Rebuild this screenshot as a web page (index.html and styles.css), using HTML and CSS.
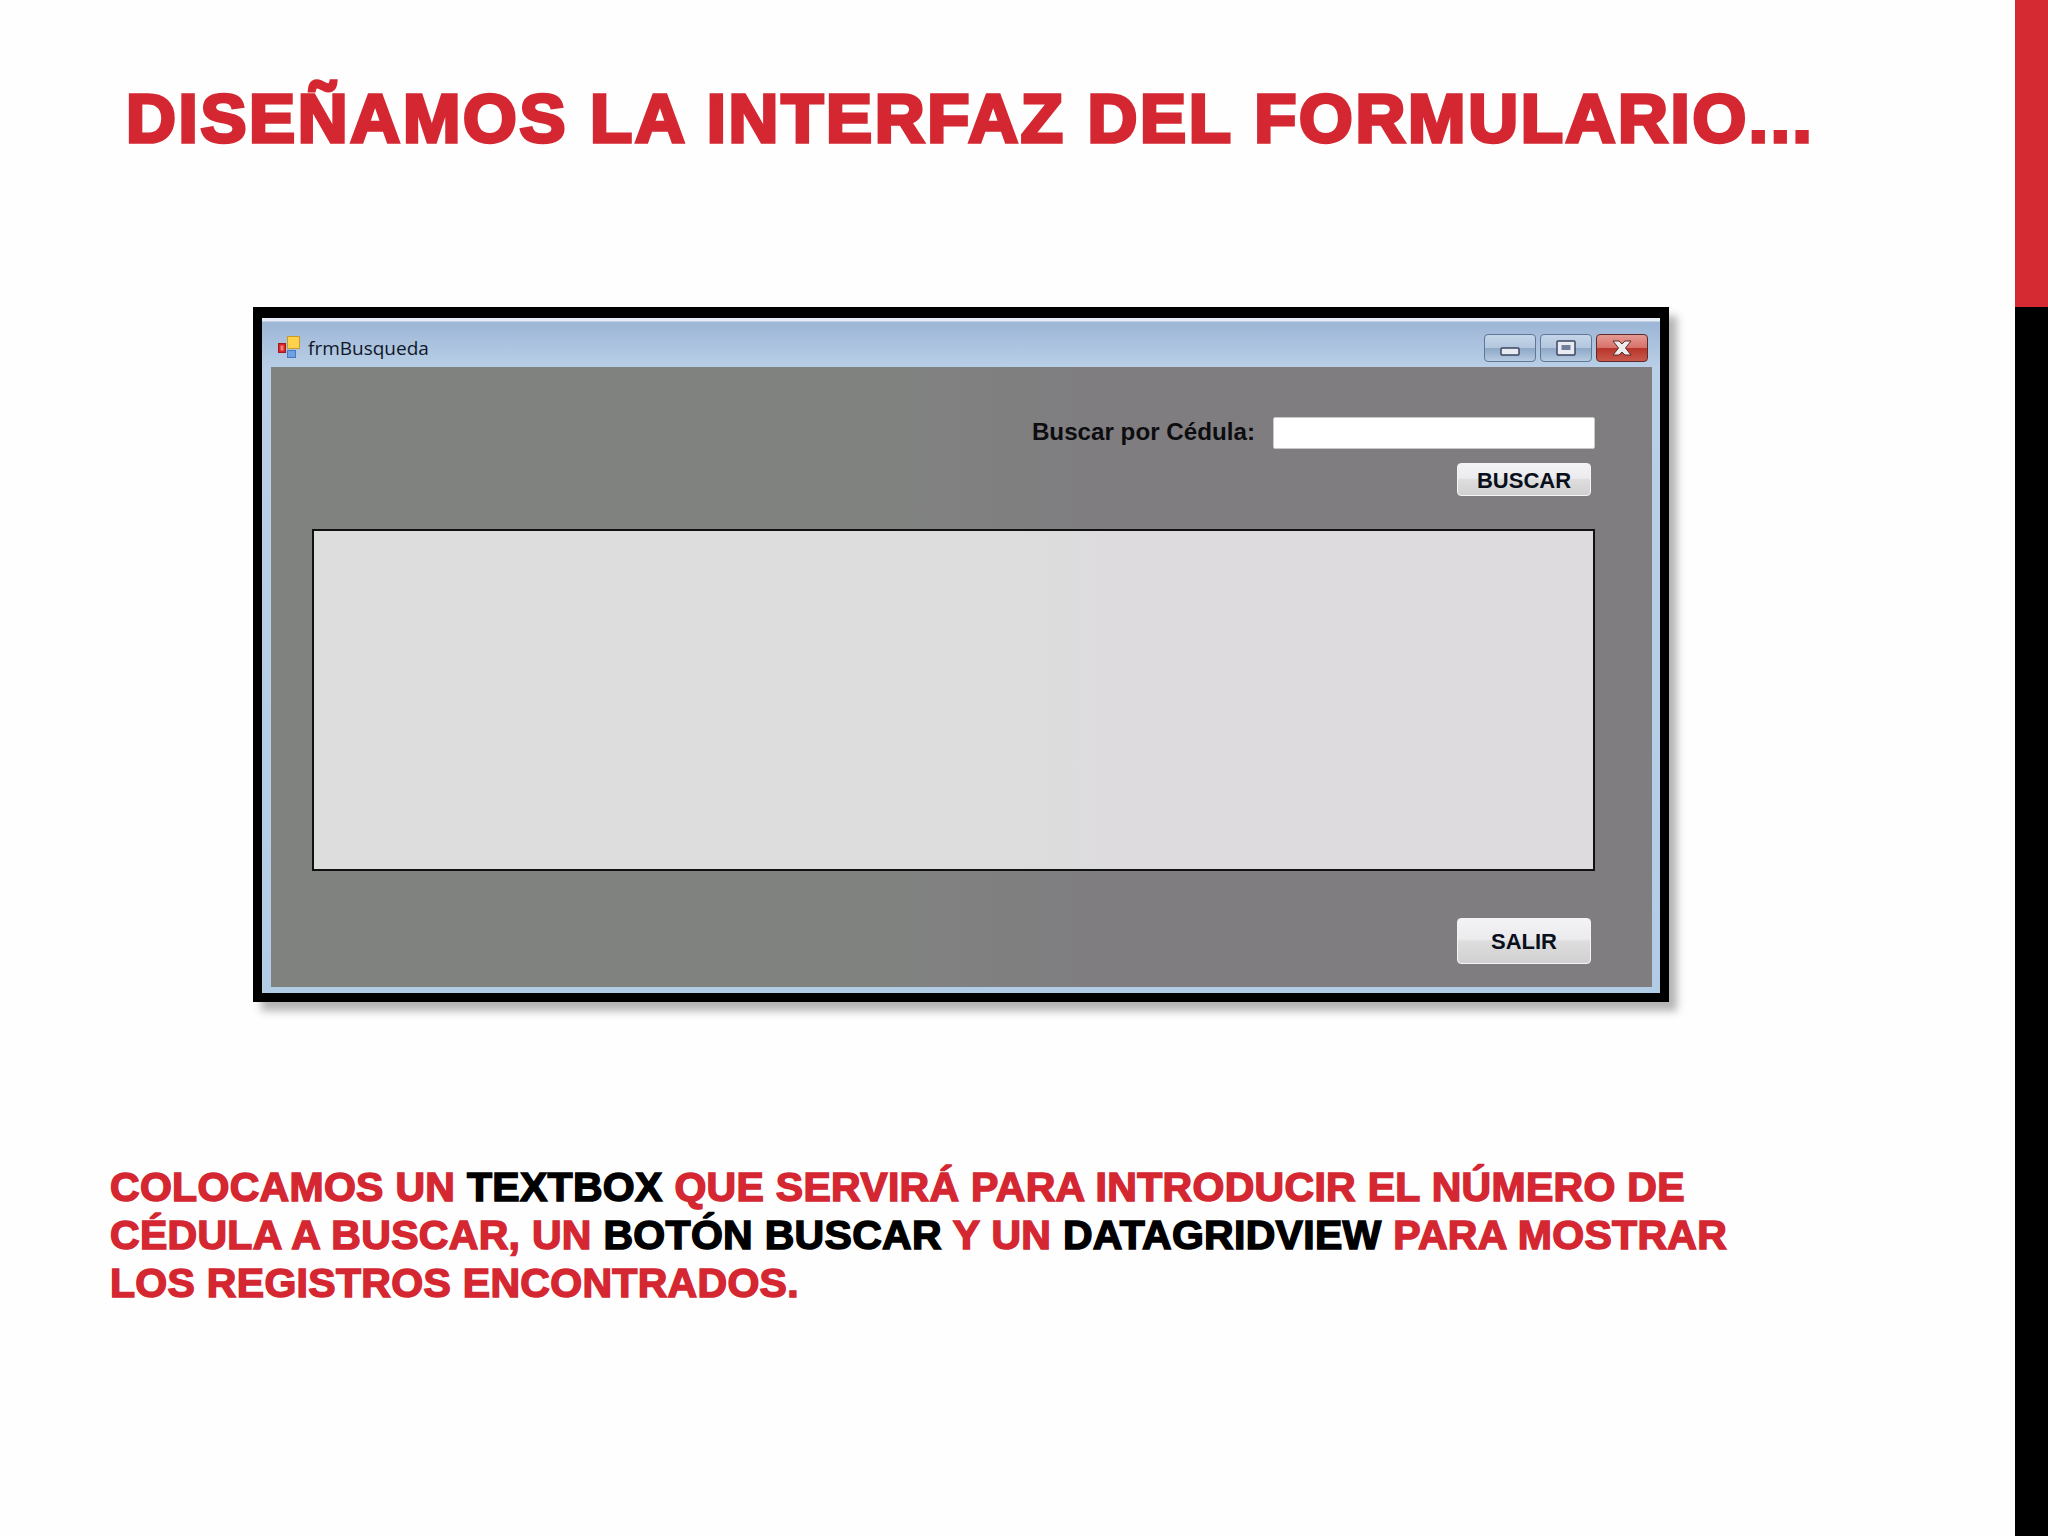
FILE: index.html
```html
<!DOCTYPE html>
<html lang="es">
<head>
    <meta charset="UTF-8">
    <title>Diseñamos la interfaz del formulario</title>
    <link rel="stylesheet" href="styles.css">
</head>
<body>
    <div class="slide">
        <div class="main">
            <h1 class="title">DISEÑAMOS LA INTERFAZ DEL FORMULARIO...</h1>

            <div class="window">
                <div class="titlebar">
                    <svg class="app-icon" width="24" height="24" viewBox="0 0 24 24">
                        <rect x="0.5" y="7.5" width="7" height="9" fill="#d8262a" stroke="#a31a1c"/>
                        <rect x="2.5" y="9.5" width="3" height="5" fill="#f08078"/>
                        <rect x="9.5" y="0.5" width="12" height="12" fill="#fbd24a" stroke="#c89a2a"/>
                        <rect x="9.5" y="14.5" width="8" height="7" fill="#6ea0e4" stroke="#4a78c0"/>
                    </svg>
                    <span class="caption">frmBusqueda</span>
                    <div class="controls">
                        <div class="ctl">
                            <svg width="20" height="9" viewBox="0 0 20 9"><rect x="1" y="1" width="18" height="7" rx="1" fill="#e8ecf2" stroke="#3c4660" stroke-width="1.5"/></svg>
                        </div>
                        <div class="ctl">
                            <svg width="20" height="16" viewBox="0 0 20 16"><rect x="1" y="1" width="18" height="14" rx="1" fill="#e8ecf2" stroke="#3c4660" stroke-width="1.5"/><rect x="5.5" y="5" width="9" height="5" fill="#6f7f9c"/></svg>
                        </div>
                        <div class="ctl ctl-close">
                            <svg width="20" height="16" viewBox="0 0 20 16"><path d="M1 1h6l3 3 3-3h6l-5.500 7 5.500 7h-6l-3-3-3 3H1l5.500-7z" fill="#ececec" stroke="#5a2b2b"/></svg>
                        </div>
                    </div>
                </div>
                <div class="client">
                    <div class="search-row">
                        <label class="search-label">Buscar por Cédula:</label>
                        <div class="textbox"></div>
                    </div>
                    <div class="button-row">
                        <div class="btn btn-buscar">BUSCAR</div>
                    </div>
                    <div class="grid"></div>
                    <div class="button-row button-row-last">
                        <div class="btn btn-salir">SALIR</div>
                    </div>
                </div>
            </div>

            <p class="desc">COLOCAMOS UN <b>TEXTBOX</b> QUE SERVIRÁ PARA INTRODUCIR EL NÚMERO DE CÉDULA A BUSCAR, UN <b>BOTÓN BUSCAR</b> Y UN <b>DATAGRIDVIEW</b> PARA MOSTRAR LOS REGISTROS ENCONTRADOS.</p>
        </div>
        <div class="side">
            <div class="side-red"></div>
            <div class="side-black"></div>
        </div>
    </div>
</body>
</html>
```

FILE: styles.css
```css
html,body{
    margin: 0;
    padding: 0;
    background: #fefefe;
}
.slide{
    display: flex;
    width: 2048px;
    height: 1536px;
    overflow: hidden;
    font-family: "Liberation Sans", Arial, sans-serif;
}
.main{
    flex: 1;
    display: flex;
    flex-direction: column;
}
.side{
    width: 33px;
    display: flex;
    flex-direction: column;
}
.side-red{
    height: 307px;
    background: #d62a33;
}
.side-black{
    flex: 1;
    background: #000;
}

.title{
    margin: 81px 0 0 126px;
    font-size: 69px;
    line-height: 76px;
    font-weight: bold;
    letter-spacing: 2.700px;
    color: #d42731;
    -webkit-text-stroke: 3.500px #d42731;
    white-space: nowrap;
}

/* the form screenshot */
.window{
    box-sizing: border-box;
    width: 1416px;
    height: 695px;
    margin: 150px 0 0 253px;
    display: flex;
    flex-direction: column;
    padding: 0 8px 6px 9px;
    border: 9px solid #000;
    border-top-width: 11px;
    background: linear-gradient(to bottom, #e6edf6 0, #e6edf6 3px, #9db6d6 4px, #b9cfe7 49px, #b3cce5 100%);
    box-shadow: 8px 9px 8px rgba(90,90,90,.45);
}
.titlebar{
    box-sizing: border-box;
    height: 49px;
    margin: 0 -8px 0 -9px;
    padding: 10px 12px 0 16px;
    flex: none;
    display: flex;
    align-items: center;
}
.app-icon{
    margin: 0 6px 0 0;
}
.caption{
    font-family: "Open Sans", "Noto Sans", sans-serif;
    font-size: 19px;
    color: #101828;
}
.controls{
    margin-left: auto;
    display: flex;
    gap: 4px;
}
.ctl{
    box-sizing: border-box;
    width: 52px;
    height: 28px;
    display: flex;
    align-items: center;
    justify-content: center;
    border: 1px solid #5f7898;
    border-radius: 4px;
    background: linear-gradient(to bottom, #c6d6e9 0, #b2c6dd 50%, #8ea8c6 52%, #b7cbe1 100%);
}
.ctl:first-child svg{
    margin-top: 8px;
}
.ctl-close{
    border-color: #5e2a2a;
    background: linear-gradient(to bottom, #e59a94 0, #d8736c 48%, #b8352a 52%, #c9584c 100%);
}

.client{
    flex: 1;
    padding: 50px 57px 0 41px;
    background: linear-gradient(to right, #808280 0, #808280 45%, #7f7d80 60%, #7f7d80 100%);
}
.search-row{
    display: flex;
    justify-content: flex-end;
    align-items: center;
    gap: 18px;
}
.search-label{
    margin-top: -2px;
    font-size: 24.200px;
    font-weight: bold;
    color: #0d0d10;
}
.textbox{
    box-sizing: border-box;
    width: 322px;
    height: 32px;
    background: #fff;
    border: 1px solid #c9c9c9;
    border-radius: 2px;
}
.button-row{
    display: flex;
    justify-content: flex-end;
    margin: 14px 4px 0 0;
}
.button-row-last{
    margin-top: 47px;
}
.btn{
    box-sizing: border-box;
    width: 134px;
    padding-top: 2px;
    display: flex;
    align-items: center;
    justify-content: center;
    font-size: 22px;
    font-weight: bold;
    color: #0a0f1c;
    border: 1px solid #f4f4f4;
    border-radius: 4px;
    background: linear-gradient(to bottom, #f3f2f4 0, #ebeaec 46%, #dededf 50%, #d0d0d0 100%);
}
.btn-buscar{
    height: 33px;
}
.btn-salir{
    height: 46px;
}
.grid{
    box-sizing: border-box;
    height: 342px;
    margin-top: 33px;
    border: 2px solid #111;
    background: linear-gradient(to right, #dcdddc 0, #dcdddc 55%, #dddbde 62%, #dddbde 100%);
}

.desc{
    width: 1640px;
    margin: 161px 0 0 110px;
    font-size: 41px;
    line-height: 48px;
    letter-spacing: 0.300px;
    font-weight: bold;
    color: #d42731;
    -webkit-text-stroke: 1.500px currentColor;
}
.desc b{
    color: #000;
}
```
